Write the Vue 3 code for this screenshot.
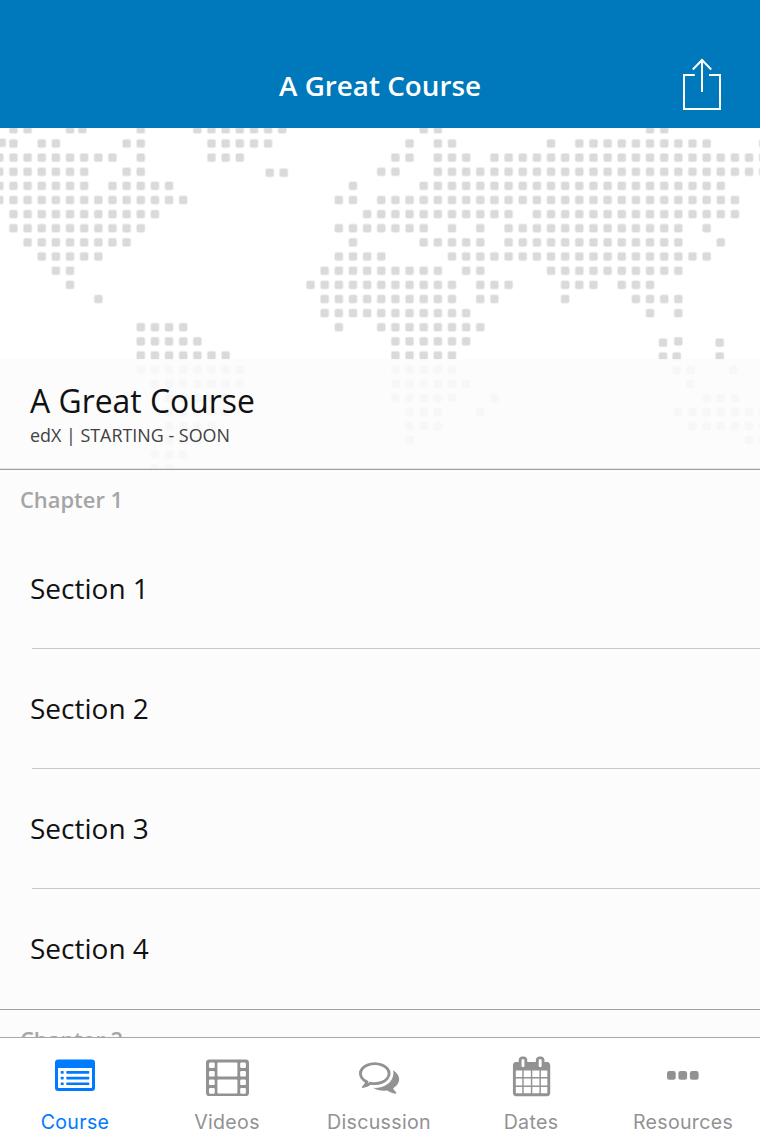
<script setup>
const sections = ['Section 1', 'Section 2', 'Section 3', 'Section 4']

// Each row of the map lists the grid columns that carry a dot, as ranges.
const rows = [
  '1-2 5 10 14-20 30-31 46-47',
  '1 3-4 9-10 15-19 29 31-32 39 41-50 54',
  '0-8 10 15-17 28-29 31-33 35-54',
  '0-6 9-10 27-28 31-54',
  '0-6 8-12 25 30-51',
  '0-13 24-25 27-52',
  '1-11 26-36 38-52',
  '1-10 24-30 32 34 36-48 50',
  '2-9 25 30-34 36-48 51',
  '3-7 24-27 32-50',
  '4-5 23-31 33-34 39-48',
  '5 22-32 34-36 40-42 44-46',
  '7 23-32 34-35 40 45-48',
  '23-33 46 48',
  '10-13 24 27-34',
  '10-14 28-33 48',
  '10-16 28-32',
  '10-17 28-32',
  '11-17 28-33',
  '12-16 28-32 35 50-52',
  '12-16 29-31 34 48-54',
  '12-15 29-31 49-54',
  '12-14 29 53-54',
  '11-13',
  '11-12',
]
// Islands that sit off the regular grid (centre x, centre y).
const loose = [
  [82.3, 1.1], [1.7, 14.8], [269.7, 44.7], [283.7, 44.7], [663, 214.6], [719.7, 214.6],
  [663, 228.5], [676.7, 228.5], [719.7, 228.5], [676.7, 242.2], [690.5, 242.2],
  [733.6, 242.2], [690.5, 256.2],
]
const dots = [...loose]
rows.forEach((row, r) => {
  for (const part of row.split(' ')) {
    const [a, b = a] = part.split('-').map(Number)
    for (let c = a; c <= b; c++) dots.push([-0.7 + c * 14.147, 1.3 + r * 14.14])
  }
})
</script>

<template>
  <div class="screen">
    <header class="nav">
      <h1>A Great Course</h1>
      <svg class="share" viewBox="680 56 44 56" width="44" height="56">
        <path d="M694.8 75H684v34h36V75h-11M702 92V60M692.8 69.5L702 60l9.2 9.5" />
      </svg>
    </header>

    <section class="hero">
      <svg class="map" width="760" height="341" viewBox="0 0 760 341">
        <g v-for="([x, y], i) in dots" :key="i">
          <rect class="halo" :x="x - 4.7" :y="y - 4.7" width="9.4" height="9.4" rx="2.4" />
          <rect class="dot" :x="x - 3.8" :y="y - 3.8" width="7.6" height="7.6" rx="1.6" />
        </g>
      </svg>
      <div class="info">
        <h2>A Great Course</h2>
        <p>edX | STARTING - SOON</p>
      </div>
    </section>

    <main class="outline">
      <h3>Chapter 1</h3>
      <ul>
        <li v-for="s in sections" :key="s"><span>{{ s }}</span></li>
      </ul>
      <h3>Chapter 2</h3>
    </main>

    <nav class="tabs">
      <a class="tab active">
        <svg viewBox="54 1054 44 44">
          <path fill-rule="evenodd" d="M58.3 1059.5H91.7Q95 1059.5 95 1062.8V1087.7Q95 1091 91.7 1091H58.3Q55 1091 55 1087.7V1062.8Q55 1059.5 58.3 1059.5ZM58 1068V1087.2Q58 1088 58.8 1088H91.2Q92 1088 92 1087.2V1068Z" />
          <g v-for="y in [1071, 1076.7, 1082.4]" :key="y">
            <rect x="60.7" :y="y" width="3" height="2.7" rx=".7" />
            <rect x="66.3" :y="y" width="23" height="2.7" rx=".7" />
          </g>
        </svg>
        <span>Course</span>
      </a>
      <a class="tab">
        <svg viewBox="206 1054 44 44">
          <rect x="206" y="1059.6" width="43" height="36.5" rx="3.4" />
          <g class="cut">
            <rect x="217.4" y="1062.4" width="20" height="14" rx="1" />
            <rect x="217.4" y="1079.4" width="20" height="14.2" rx="1" />
            <g v-for="y in [1062.4, 1071, 1079.5, 1088.1]" :key="y">
              <rect x="209" :y="y" width="5.7" height="5.6" rx="1.2" />
              <rect x="240.2" :y="y" width="5.7" height="5.6" rx="1.2" />
            </g>
          </g>
        </svg>
        <span>Videos</span>
      </a>
      <a class="tab">
        <svg viewBox="358 1054 44 44">
          <path transform="translate(359 1056.4) scale(.0224)" d="M704 384q-153 0-286 52t-211.5 141-78.5 191q0 82 53 158t149 132l97 56-35 84q34-20 62-39l44-31 53 10q78 14 153 14 153 0 286-52t211.5-141 78.5-191-78.5-191-211.5-141-286-52zm0-128q191 0 353.5 68.5t256.5 186.5 94 257-94 257-256.5 186.5-353.5 68.5q-86 0-176-16-124 88-278 128-36 9-86 16h-3q-11 0-20.5-8t-11.5-21q-1-3-1-6.5t.5-6.5 2-6l2.5-5 3.5-5.5 4-5 4.5-5 4-4.5q5-6 23-25t26-29.5 22.5-29 25-38.5 20.5-44q-124-72-195-177t-71-224q0-139 94-257t256.5-186.5 353.5-68.5zm822 1169q10 24 20.5 44t25 38.5 22.5 29 26 29.5 23 25q1 1 4 4.5t4.5 5 4 5 3.5 5.5l2.5 5 2 6 .5 6.5-1 6.5q-3 14-13 22t-22 7q-50-7-86-16-154-40-278-128-90 16-176 16-271 0-472-132 58 4 88 4 161 0 309-45t264-129q125-92 192-212t67-254q0-77-23-152 129 71 204 178t75 230q0 120-71 224.5t-195 176.5z" />
        </svg>
        <span>Discussion</span>
      </a>
      <a class="tab">
        <svg viewBox="510 1054 44 44">
          <path transform="translate(511.5 1056.4) scale(.0224 .0222)" d="M192 1664h288v-288h-288v288zm352 0h320v-288h-320v288zm-352-352h288v-320h-288v320zm352 0h320v-320h-320v320zm-352-384h288v-288h-288v288zm736 736h320v-288h-320v288zm-384-736h320v-288h-320v288zm768 736h288v-288h-288v288zm-384-352h320v-320h-320v320zm-352-864v-288q0-13-9.5-22.5t-22.5-9.5h-64q-13 0-22.5 9.5t-9.5 22.5v288q0 13 9.5 22.5t22.5 9.5h64q13 0 22.5-9.5t9.5-22.5zm736 864h288v-320h-288v320zm-384-384h320v-288h-320v288zm384 0h288v-288h-288v288zm32-480v-288q0-13-9.5-22.5t-22.5-9.5h-64q-13 0-22.5 9.5t-9.5 22.5v288q0 13 9.5 22.5t22.5 9.5h64q13 0 22.5-9.5t9.5-22.5zm384-64v1280q0 52-38 90t-90 38h-1408q-52 0-90-38t-38-90v-1280q0-52 38-90t90-38h128v-96q0-66 47-113t113-47h64q66 0 113 47t47 113v96h384v-96q0-66 47-113t113-47h64q66 0 113 47t47 113v96h128q52 0 90 38t38 90z" />
        </svg>
        <span>Dates</span>
      </a>
      <a class="tab">
        <svg viewBox="662 1054 44 44">
          <rect v-for="x in [667, 678.4, 689.9]" :key="x" :x="x" y="1071" width="8.7" height="8.7" rx="2.3" />
        </svg>
        <span>Resources</span>
      </a>
    </nav>
  </div>
</template>

<style>
body { margin: 0; background: #fcfcfc; }
</style>

<style scoped>
.screen {
  display: flex;
  flex-direction: column;
  width: 760px;
  height: 1136px;
  overflow: hidden;
  background: #fcfcfc;
  font-family: "Open Sans", "Noto Sans", sans-serif;
}
h1, h2, h3, p, ul { margin: 0; padding: 0; font-weight: 400; }
.nav {
  position: relative;
  flex: none;
  height: 128px;
  box-sizing: border-box;
  padding-top: 65px;
  background: #0079bc;
  color: #fff;
  text-align: center;
}
.nav h1 { font-size: 27.8px; line-height: 40px; font-weight: 600; }
.share { position: absolute; left: 680px; top: 56px; fill: none; stroke: #fff; stroke-width: 2; }
.hero {
  position: relative;
  flex: none;
  display: flex;
  align-items: flex-end;
  height: 342px;
  box-sizing: border-box;
  border-bottom: 1px solid #a0a0a0;
  background: #fff;
}
.map { position: absolute; inset: 0; }
.halo { fill: #efefef; }
.dot { fill: #dadada; }
.info {
  position: relative;
  width: 100%;
  height: 110px;
  box-sizing: border-box;
  padding: 20px 30px 0;
  border-bottom: 1px solid #e4e4e4;
  background: rgba(252, 252, 252, .85);
}
.info h2 { font-size: 31.9px; line-height: 44px; color: #111; }
.info p { font-size: 17.9px; line-height: 25px; color: #414141; }
.outline { flex: 1; min-height: 0; overflow: hidden; }
.outline h3 {
  height: 59px;
  box-sizing: border-box;
  padding: 15px 20px 0;
  font-size: 21.9px;
  line-height: 30px;
  font-weight: 600;
  color: #a5a5a5;
}
.outline ul { list-style: none; border-bottom: 1px solid #a0a0a0; }
.outline li { display: flex; padding-left: 32px; height: 120px; }
.outline li span {
  flex: 1;
  border-bottom: 1px solid #c8c7cc;
  text-indent: -2px;
  font-size: 28px;
  line-height: 119px;
  color: #111;
}
.outline li:last-child span { border-bottom: 0; }
.tabs {
  flex: none;
  display: grid;
  grid-template-columns: repeat(5, 1fr);
  height: 99px;
  box-sizing: border-box;
  border-top: 1px solid #a8a8a8;
  background: #fff;
}
.tab {
  display: flex;
  flex-direction: column;
  align-items: center;
  padding-top: 16px;
  color: #929292;
  font-family: Inter, "Liberation Sans", sans-serif;
  font-size: 19.6px;
  line-height: 24px;
  letter-spacing: .3px;
}
.tab.active { color: #007aff; }
.tab svg { width: 44px; height: 44px; fill: currentColor; }
.tab .cut { fill: #fff; }
.tab span { margin-top: 12px; padding-right: 2px; }
</style>
